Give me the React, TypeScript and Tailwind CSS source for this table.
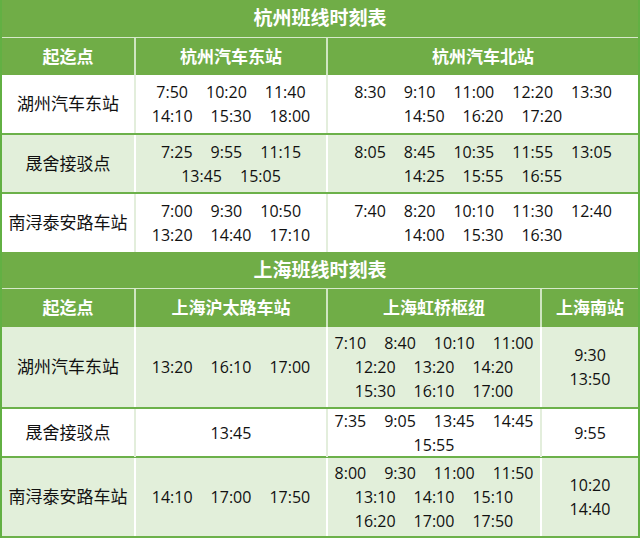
import React from "react";

type Row = { name: string; cells: string[][][]; bg: "white" | "green" };

const FONT = { fontFamily: '"Open Sans", "Noto Sans CJK SC", sans-serif' };

function Times({ lines }: { lines: string[][] }) {
  return (
    <div className="flex flex-col items-center justify-center">
      {lines.map((l, i) => (
        <div key={i} className="flex justify-center gap-[18px] leading-[24px] text-[16px] text-[#111]">
          {l.map((t, j) => (
            <span key={j}>{t}</span>
          ))}
        </div>
      ))}
    </div>
  );
}

function Section({
  title,
  headers,
  cols,
  rows,
  heights,
  titleH,
  headH,
  last,
}: {
  title: string;
  headers: string[];
  cols: string;
  rows: Row[];
  heights: string[];
  titleH: string;
  headH: string;
  last?: boolean;
}) {
  return (
    <div>
      <div className={`${titleH} flex items-center justify-center bg-[#70ad47] border-b border-[#d6e9cb] text-white font-bold text-[19px]`}>
        {title}
      </div>
      <div className={`${headH} grid ${cols} bg-[#70ad47]`}>
        {headers.map((h, i) => (
          <div
            key={i}
            className={`flex items-center justify-center text-white font-bold text-[17px] ${i > 0 ? "border-l-2 border-[#cfe5c1]" : ""}`}
          >
            {h}
          </div>
        ))}
      </div>
      {rows.map((r, ri) => {
        const green = r.bg === "green";
        const sep = green ? "border-white" : "border-[#e3eedc]";
        return (
          <div
            key={ri}
            className={`${heights[ri]} grid ${cols} ${green ? "bg-[#e2efda]" : "bg-white"} ${ri > 0 ? "border-t-2 border-[#6cb14a]" : ""} ${last && ri === rows.length - 1 ? "border-b-2 border-b-[#6cb14a]" : ""}`}
          >
            <div className="flex items-center justify-center text-[17px] text-[#111]">{r.name}</div>
            {r.cells.map((c, ci) => (
              <div key={ci} className={`flex items-center justify-center border-l-2 ${sep}`}>
                <Times lines={c} />
              </div>
            ))}
          </div>
        );
      })}
    </div>
  );
}

export default function App() {
  const hz: Row[] = [
    {
      name: "湖州汽车东站",
      bg: "white",
      cells: [
        [["7:50", "10:20", "11:40"], ["14:10", "15:30", "18:00"]],
        [["8:30", "9:10", "11:00", "12:20", "13:30"], ["14:50", "16:20", "17:20"]],
      ],
    },
    {
      name: "晟舍接驳点",
      bg: "green",
      cells: [
        [["7:25", "9:55", "11:15"], ["13:45", "15:05"]],
        [["8:05", "8:45", "10:35", "11:55", "13:05"], ["14:25", "15:55", "16:55"]],
      ],
    },
    {
      name: "南浔泰安路车站",
      bg: "white",
      cells: [
        [["7:00", "9:30", "10:50"], ["13:20", "14:40", "17:10"]],
        [["7:40", "8:20", "10:10", "11:30", "12:40"], ["14:00", "15:30", "16:30"]],
      ],
    },
  ];
  const sh: Row[] = [
    {
      name: "湖州汽车东站",
      bg: "green",
      cells: [
        [["13:20", "16:10", "17:00"]],
        [["7:10", "8:40", "10:10", "11:00"], ["12:20", "13:20", "14:20"], ["15:30", "16:10", "17:00"]],
        [["9:30"], ["13:50"]],
      ],
    },
    {
      name: "晟舍接驳点",
      bg: "white",
      cells: [
        [["13:45"]],
        [["7:35", "9:05", "13:45", "14:45"], ["15:55"]],
        [["9:55"]],
      ],
    },
    {
      name: "南浔泰安路车站",
      bg: "green",
      cells: [
        [["14:10", "17:00", "17:50"]],
        [["8:00", "9:30", "11:00", "11:50"], ["13:10", "14:10", "15:10"], ["16:20", "17:00", "17:50"]],
        [["10:20"], ["14:40"]],
      ],
    },
  ];
  return (
    <div style={FONT} className="w-[640px] h-[538px] overflow-hidden bg-white border-x-2 border-[#62b043]">
      <Section
        title="杭州班线时刻表"
        headers={["起迄点", "杭州汽车东站", "杭州汽车北站"]}
        cols="grid-cols-[132px_192px_1fr]"
        rows={hz}
        heights={["h-[58px]", "h-[59px]", "h-[60px]"]}
        titleH="h-[38px]"
        headH="h-[37px]"
      />
      <Section
        title="上海班线时刻表"
        headers={["起迄点", "上海沪太路车站", "上海虹桥枢纽", "上海南站"]}
        cols="grid-cols-[132px_192px_214px_1fr]"
        rows={sh}
        heights={["h-[80px]", "h-[49px]", "h-[82px]"]}
        titleH="h-[37px]"
        headH="h-[38px]"
        last
      />
    </div>
  );
}
